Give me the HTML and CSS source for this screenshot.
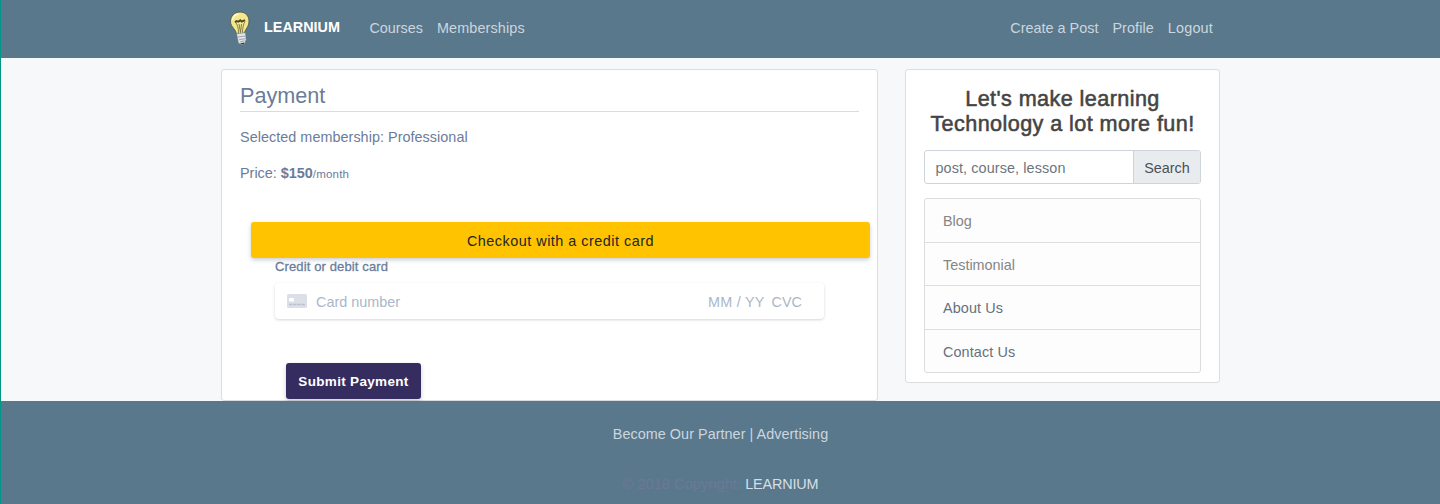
FILE: index.html
```html
<!DOCTYPE html>
<html lang="en">
<head>
<meta charset="utf-8">
<title>Learnium - Payment</title>
<link rel="stylesheet" href="styles.css">
</head>
<body>
<header class="navbar">
  <div class="container nav-inner">
    <svg class="logo" width="22" height="34" viewBox="0 0 22 34">
      <path d="M11 1C5.500 1 1.500 5 1.500 10.500c0 3 1.600 5 3.200 7 1.500 1.800 2.300 3.500 2.800 5.500l8-.8c.3-2 1.300-3.500 2.400-5.200C19 15 20 13 20 10 20 5 16.500 1 11 1z" fill="#f5e88c" stroke="#4f574c" stroke-width=".9"/>
      <path d="M3.500 9c.5-3 3-5.500 6-6" fill="none" stroke="#fffbd0" stroke-width="1.500"/>
      <path d="M9.500 22C9.500 17 8.500 14 6.500 11M13.500 21.500c0-4 .8-8 2.500-11.500M10 13l1.500 8.500 1-8.500" fill="none" stroke="#77713f" stroke-width=".9"/>
      <path d="M6 11.300l1.500-1.300 2 .8 1.800-1.500 1.500 1.300L16 9" fill="none" stroke="#4a4628" stroke-width="1.800"/>
      <path d="M7.500 22.500l9-.8.7 7-1.700 4-3 1.200-3.200-2z" fill="#dfe4e9" stroke="#6b747c" stroke-width=".6"/>
      <path d="M9 26l7.500-1M10 28.700l6.500-1M11 31l4.500-1.200" stroke="#8d969f" stroke-width=".8"/>
      <path d="M11.500 33l3.500-.9" stroke="#2c3135" stroke-width="1.100"/>
    </svg>
    <a class="brand">LEARNIUM</a>
    <nav class="links"><a class="courses">Courses</a><a class="members">Memberships</a></nav>
    <nav class="links account"><a class="create">Create a Post</a><a class="profile">Profile</a><a class="logout">Logout</a></nav>
  </div>
</header>
<main class="container main">
  <section class="card payment">
    <h1 class="title"><span>Payment</span></h1>
    <p class="line selected"><span>Selected membership: Professional</span></p>
    <p class="line price"><span>Price: <b>$150</b><small>/month</small></span></p>
    <button class="checkout"><span>Checkout with a credit card</span></button>
    <form class="card-form">
      <label class="card-label"><span>Credit or debit card</span></label>
      <div class="card-input">
        <svg class="card-icon" width="20" height="14" viewBox="0 0 20 14"><rect width="20" height="14" rx="1.500" fill="#dcdfe8"/><rect x="2" y="4" width="5" height="3.500" rx=".7" fill="#fff"/><path d="M2 10.500h16" stroke="#b9bfce" stroke-width="1.300" stroke-dasharray="3.400 .8"/></svg>
        <span class="number">Card number</span>
        <span class="expiry">MM / YY</span>
        <span class="cvc">CVC</span>
      </div>
      <button class="submit" type="button"><span>Submit Payment</span></button>
    </form>
  </section>
  <aside class="card side">
    <h2 class="slogan"><span class="s1">Let's make learning</span><br><span class="s2">Technology a lot more fun!</span></h2>
    <div class="search"><span class="field"><span>post, course, lesson</span></span><button class="go"><span>Search</span></button></div>
    <ul class="menu">
      <li class="muted"><span>Blog</span></li>
      <li class="muted"><span>Testimonial</span></li>
      <li><span>About Us</span></li>
      <li><span>Contact Us</span></li>
    </ul>
  </aside>
</main>
<footer class="footer">
  <p class="partners"><span>Become Our Partner | Advertising</span></p>
  <p class="copyright"><span>© 2018 Copyright: <a>LEARNIUM</a></span></p>
</footer>
</body>
</html>
```
FILE: styles.css
```css
* { box-sizing: border-box; }
html, body, h1, h2, p, ul { margin: 0; padding: 0; }
body {
  height: 504px;
  overflow: hidden;
  display: flex;
  flex-direction: column;
  border-left: 1px solid #009688;
  background: #f7f8fa;
  color: #6b7c9a;
  font: 14.4px/22px "Liberation Sans", Arial, sans-serif;
}
button { border: 0; padding: 0; margin: 0; font: inherit; }
.container { width: 999px; margin-left: 220px; }
.navbar { height: 58px; background: #5a788c; }
.nav-inner { display: flex; align-items: center; height: 56px; }
.logo { margin-left: 8px; width: 22px; flex: none; }
.brand { margin-left: 13px; width: 76px; color: #fff; font-weight: bold; padding-bottom: 2px; }
.links { display: flex; margin-left: 29.400px; gap: 14px; color: #cbd6df; }
.members { letter-spacing: .13px; }
.account { margin-left: auto; margin-right: 7px; }
.profile { letter-spacing: .08px; }
.logout { letter-spacing: .2px; }
.create { letter-spacing: .01px; }
.main { display: flex; height: 343px; align-items: flex-start; justify-content: space-between; padding-top: 11px; }
.card { background: #fff; border: 1px solid #dcdddf; border-radius: 3px; }
.payment { width: 657px; height: 332px; padding: 11px 18px 0; }
.title { height: 31px; border-bottom: 1px solid #d9dbde; font-weight: normal; font-size: 21.6px; line-height: 29px; }
.selected { margin-top: 14px; letter-spacing: .04px; }
.price { margin-top: 14px; }
.price small { font-size: 11.5px; letter-spacing: .2px; }
.checkout { display: block; width: 619px; height: 36px; margin: 37px 0 0 11px; border-radius: 3px; background: #ffc300; color: #212529; box-shadow: 0 2px 4px rgba(50, 60, 90, .26); letter-spacing: .5px; line-height: 38px; }
.card-form { padding-left: 35px; }
.card-label { display: block; height: 25px; font-size: 13px; line-height: 18px; letter-spacing: .13px; -webkit-text-stroke: .3px #6b7c9a; }
.card-input { display: flex; align-items: center; width: 549px; height: 36px; padding: 0 22px 0 12px; border-radius: 4px; color: #aab7c8; box-shadow: 0 1px 3px #cfd7df; line-height: 22px; }
.card-input span { padding-top: 2px; }
.number { margin-left: 9px; }
.expiry { margin-left: auto; letter-spacing: .25px; }
.cvc { margin-left: 7px; }
.submit { display: block; width: 135px; height: 36px; margin: 44px 0 0 11px; border-radius: 3px; background: #352c5f; color: #fff; font-weight: bold; font-size: 13.5px; line-height: 37px; letter-spacing: .32px; box-shadow: 0 2px 4px rgba(50, 50, 93, .25); }
.side { width: 315px; height: 314px; padding: 16px 18px 0; }
.slogan { height: 64px; text-align: center; color: #444; font-weight: normal; font-size: 21.6px; line-height: 25px; white-space: nowrap; letter-spacing: .42px; -webkit-text-stroke: .55px #444; }
.search { display: flex; height: 34px; border: 1px solid #ced4da; border-radius: 3px; overflow: hidden; line-height: 34px; }
.field { flex: 1; padding-left: 10.500px; color: #6c757d; letter-spacing: .1px; }
.go { width: 67px; background: #e9ecef; border-left: 1px solid #ced4da; color: #495057; }
.menu { height: 175px; margin-top: 14px; list-style: none; display: grid; grid-template-rows: 44px 43px 44px 1fr; border: 1px solid #dcdddf; border-radius: 3px; background: #fdfdfd; color: #65717d; }
.menu li { padding-left: 18px; line-height: 44px; border-bottom: 1px solid #dcdddf; letter-spacing: .1px; }
.menu li:last-child { border-bottom: 0; }
.menu .muted { color: #858585; letter-spacing: 0; }
.footer { flex: 1; background: #5a788c; text-align: center; padding-top: 22px; }
.partners { color: #cbd6df; letter-spacing: .04px; }
.copyright { margin-top: 28px; color: #6b7898; letter-spacing: .14px; }
.copyright a { color: #d6dfe6; letter-spacing: -.15px; }
```
